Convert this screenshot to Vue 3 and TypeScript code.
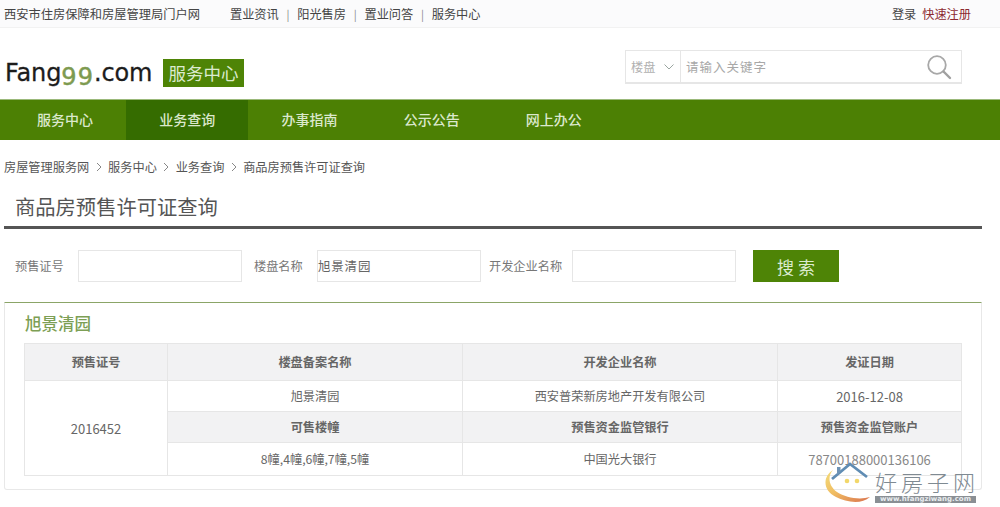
<script setup lang="ts">
const topLinks: string[] = ['置业资讯', '阳光售房', '置业问答', '服务中心']
const navItems: string[] = ['服务中心', '业务查询', '办事指南', '公示公告', '网上办公']
const crumbs: string[] = ['房屋管理服务网', '服务中心', '业务查询', '商品房预售许可证查询']
</script>

<template>
  <div class="page">
    <div class="topbar">
      <span class="site">西安市住房保障和房屋管理局门户网</span>
      <div class="toplinks">
        <template v-for="(link, i) in topLinks" :key="link">
          <span v-if="i > 0" class="sep">|</span>
          <a>{{ link }}</a>
        </template>
      </div>
      <div class="account">
        <a>登录</a>
        <a class="register">快速注册</a>
      </div>
    </div>

    <header class="header">
      <div class="logo">Fang<span class="nines">99</span>.com</div>
      <div class="badge">服务中心</div>
      <div class="search">
        <div class="scope">
          <span>楼盘</span>
          <svg width="12" height="8" viewBox="0 0 12 8"><path d="M1.5 1.5 6 6l4.5-4.5" fill="none" stroke="#9aa5a0" stroke-width="1" /></svg>
        </div>
        <div class="keyword">请输入关键字</div>
        <svg class="glass" width="26" height="26" viewBox="0 0 26 26">
          <circle cx="11" cy="11" r="8.8" fill="none" stroke="#a8a8a8" stroke-width="1.8" />
          <path d="M17.5 17.5 24 24" stroke="#a0a0a0" stroke-width="2.4" stroke-linecap="round" />
        </svg>
      </div>
    </header>

    <nav class="nav">
      <a v-for="(item, i) in navItems" :key="item" :class="{ active: i === 1 }">{{ item }}</a>
    </nav>

    <div class="crumbs">
      <template v-for="(crumb, i) in crumbs" :key="crumb">
        <svg v-if="i > 0" class="chev" width="6" height="10" viewBox="0 0 6 10"><path d="M1 1l4 4-4 4" fill="none" stroke="#888" stroke-width="1" /></svg>
        <span>{{ crumb }}</span>
      </template>
    </div>

    <h1 class="title">商品房预售许可证查询</h1>

    <form class="filters" @submit.prevent>
      <label class="l1">预售证号</label>
      <div class="field"></div>
      <label class="l2">楼盘名称</label>
      <div class="field filled">旭景清园</div>
      <label class="l3">开发企业名称</label>
      <div class="field"></div>
      <button class="go" type="submit">搜 索</button>
    </form>

    <section class="panel">
      <h2>旭景清园</h2>
      <table>
        <colgroup>
          <col class="c1" /><col class="c2" /><col class="c3" /><col class="c4" />
        </colgroup>
        <tbody>
          <tr class="r1">
            <th>预售证号</th>
            <th>楼盘备案名称</th>
            <th>开发企业名称</th>
            <th>发证日期</th>
          </tr>
          <tr class="r2">
            <td rowspan="3" class="num">2016452</td>
            <td>旭景清园</td>
            <td>西安普荣新房地产开发有限公司</td>
            <td class="num">2016-12-08</td>
          </tr>
          <tr class="r3">
            <th>可售楼幢</th>
            <th>预售资金监管银行</th>
            <th>预售资金监管账户</th>
          </tr>
          <tr class="r4">
            <td>8幢,4幢,6幢,7幢,5幢</td>
            <td>中国光大银行</td>
            <td class="num account-no">78700188000136106</td>
          </tr>
        </tbody>
      </table>
    </section>

    <div class="watermark">
      <svg class="wm-icon" width="47" height="44" viewBox="0 0 47 44">
        <defs>
          <linearGradient id="wm-arc" x1="0" y1="0" x2="1" y2="1">
            <stop offset="0" stop-color="#f3dc7a" />
            <stop offset="0.45" stop-color="#f0bd62" />
            <stop offset="1" stop-color="#d9714e" />
          </linearGradient>
        </defs>
        <path d="M9 9C-1 15-2 29 12 36 22 41 37 44 46 36 36 39 22 37 13 31 5 25 3 16 9 9z" fill="url(#wm-arc)" />
        <path d="M8 18 26 3l17 13" fill="none" stroke="#5f8cb3" stroke-width="2.8" />
        <path d="M13 6h3.5v5L13 14z" fill="#6f93b4" />
        <circle cx="23" cy="20" r="2.3" fill="#f2d76a" />
        <circle cx="33" cy="20" r="2.3" fill="#f2d76a" />
      </svg>
      <div class="wm-text">
        <div class="wm-name">好房子网</div>
        <div class="wm-url">www.hfangziwang.com</div>
      </div>
    </div>
  </div>
</template>

<style>
html, body { margin: 0; background: #fff; overflow: hidden; }
</style>

<style scoped>
.page {
  position: relative;
  width: 1000px;
  height: 507px;
  overflow: hidden;
  font-family: "Noto Sans CJK SC", "Liberation Sans", sans-serif;
  font-size: 12.2px;
  color: #555;
  background: #fff;
}
.topbar {
  display: flex;
  align-items: center;
  height: 27px;
  padding: 0 29px 0 4px;
  background: #fbfbfc;
  border-bottom: 1px solid #f2f2f2;
  color: #444;
}
.site { width: 226px; font-size: 12.25px; white-space: nowrap; }
.toplinks { display: flex; align-items: center; }
.sep { width: 18.5px; text-align: center; color: #888; font-size: 11px; }
.account { margin-left: auto; display: flex; gap: 6px; }
.register { color: #8c2a30; }

.header {
  display: flex;
  align-items: flex-start;
  height: 72px;
  padding-left: 5px;
}
.logo {
  margin-top: 27px;
  width: 158px;
  font-family: "DejaVu Sans", sans-serif;
  font-size: 24px;
  line-height: 36px;
  color: #1c1c1c;
  letter-spacing: -0.1px;
  -webkit-text-stroke: 0.3px #1c1c1c;
  white-space: nowrap;
}
.nines {
  color: #7d9a50;
  -webkit-text-stroke: 0.5px #7d9a50;
  letter-spacing: 1px;
  vertical-align: -4px;
  line-height: 1;
}
.badge {
  margin-top: 31px;
  width: 81px;
  height: 28px;
  line-height: 27px;
  text-align: center;
  background: #4e8406;
  color: #dcebcf;
  font-size: 17.5px;
}
.search {
  display: flex;
  align-items: center;
  box-sizing: border-box;
  margin: 22px 0 0 381px;
  width: 337px;
  height: 34px;
  border: 1px solid #e6e6e6;
  border-bottom-width: 2px;
  color: #b0b0b0;
}
.scope {
  display: flex;
  align-items: center;
  gap: 8px;
  box-sizing: border-box;
  width: 55px;
  height: 31px;
  padding-left: 5px;
  border-right: 1px solid #e6e6e6;
}
.keyword { flex: 1; padding-left: 5px; font-size: 12.5px; letter-spacing: 1px; color: #a8a8a8; }
.glass { margin-right: 9px; }

.nav {
  display: flex;
  height: 40px;
  padding-left: 4px;
  background: #4c8004;
  border-top: 1px solid #9bb97a;
  box-sizing: content-box;
  margin-top: -1px;
}
.nav a {
  width: 122.2px;
  line-height: 39px;
  text-align: center;
  color: #dbe8cc;
  font-size: 14px;
  font-weight: 500;
}
.nav a.active { background: #356c00; }

.crumbs {
  display: flex;
  align-items: center;
  gap: 6.4px;
  margin-top: 18px;
  padding-left: 4px;
  height: 18px;
  color: #555;
}
.title {
  margin: 9px 0 0 4px;
  width: 978px;
  box-sizing: border-box;
  height: 44px;
  padding-left: 11px;
  border-bottom: 3px solid #555;
  font-size: 20.3px;
  line-height: 43px;
  font-weight: 400;
  color: #555;
}
.filters {
  display: flex;
  align-items: center;
  height: 32px;
  margin-top: 21px;
  color: #777;
}
.filters label { display: block; white-space: nowrap; }
.l1 { margin-left: 15px; width: 63px; }
.l2 { margin-left: 12px; width: 63px; }
.l3 { margin-left: 8px; width: 83px; }
.field {
  box-sizing: border-box;
  width: 164px;
  height: 32px;
  border: 1px solid #e6e6e6;
  background: #fff;
  line-height: 30px;
  font-size: 12.5px;
  letter-spacing: 0.8px;
  color: #666;
}
.go {
  width: 86px;
  height: 32px;
  margin-left: 17px;
  padding: 0;
  border: 0;
  background: #4e8406;
  color: #dcebcf;
  font-family: inherit;
  font-size: 17px;
  font-weight: 400;
}
.panel {
  box-sizing: border-box;
  width: 978px;
  height: 188px;
  margin: 20px 0 0 4px;
  padding: 0 19px;
  border: 1px solid #e8e8e8;
  border-top: 1px solid #8ba567;
  border-radius: 0 0 3px 3px;
}
.panel h2 {
  margin: 0;
  height: 40px;
  padding-left: 1px;
  font-size: 16.5px;
  line-height: 41px;
  font-weight: 500;
  color: #7d9f55;
}
table {
  width: 937px;
  table-layout: fixed;
  border-collapse: collapse;
  text-align: center;
}
.c1 { width: 143px; }
.c2 { width: 295px; }
.c3 { width: 315px; }
.c4 { width: 184px; }
th, td {
  padding: 0;
  border: 1px solid #e6e6e6;
  font-size: 12.2px;
  color: #666;
}
th { background: #f2f2f3; font-weight: 700; color: #666; }
td.num { font-size: 13px; color: #666; }
td.account-no { color: #888; white-space: nowrap; }
.r1 { height: 37px; }
.r2 { height: 31px; }
.r3 { height: 31px; }
.r4 { height: 33px; }

.watermark {
  position: absolute;
  left: 824px;
  top: 461px;
  display: flex;
  gap: 4px;
}
.wm-name {
  width: 104px;
  height: 35px;
  padding-top: 9px;
  box-sizing: border-box;
  font-family: "Noto Sans CJK JP", serif;
  font-size: 22px;
  font-weight: 300;
  line-height: 22px;
  letter-spacing: 4px;
  color: #7f8a92;
}
.wm-url {
  width: 101px;
  height: 7px;
  background: #8a8f94;
  color: #e8ecef;
  font-family: "DejaVu Sans", sans-serif;
  font-size: 7px;
  font-weight: 700;
  line-height: 7px;
  text-align: center;
  white-space: nowrap;
  overflow: hidden;
}
</style>
